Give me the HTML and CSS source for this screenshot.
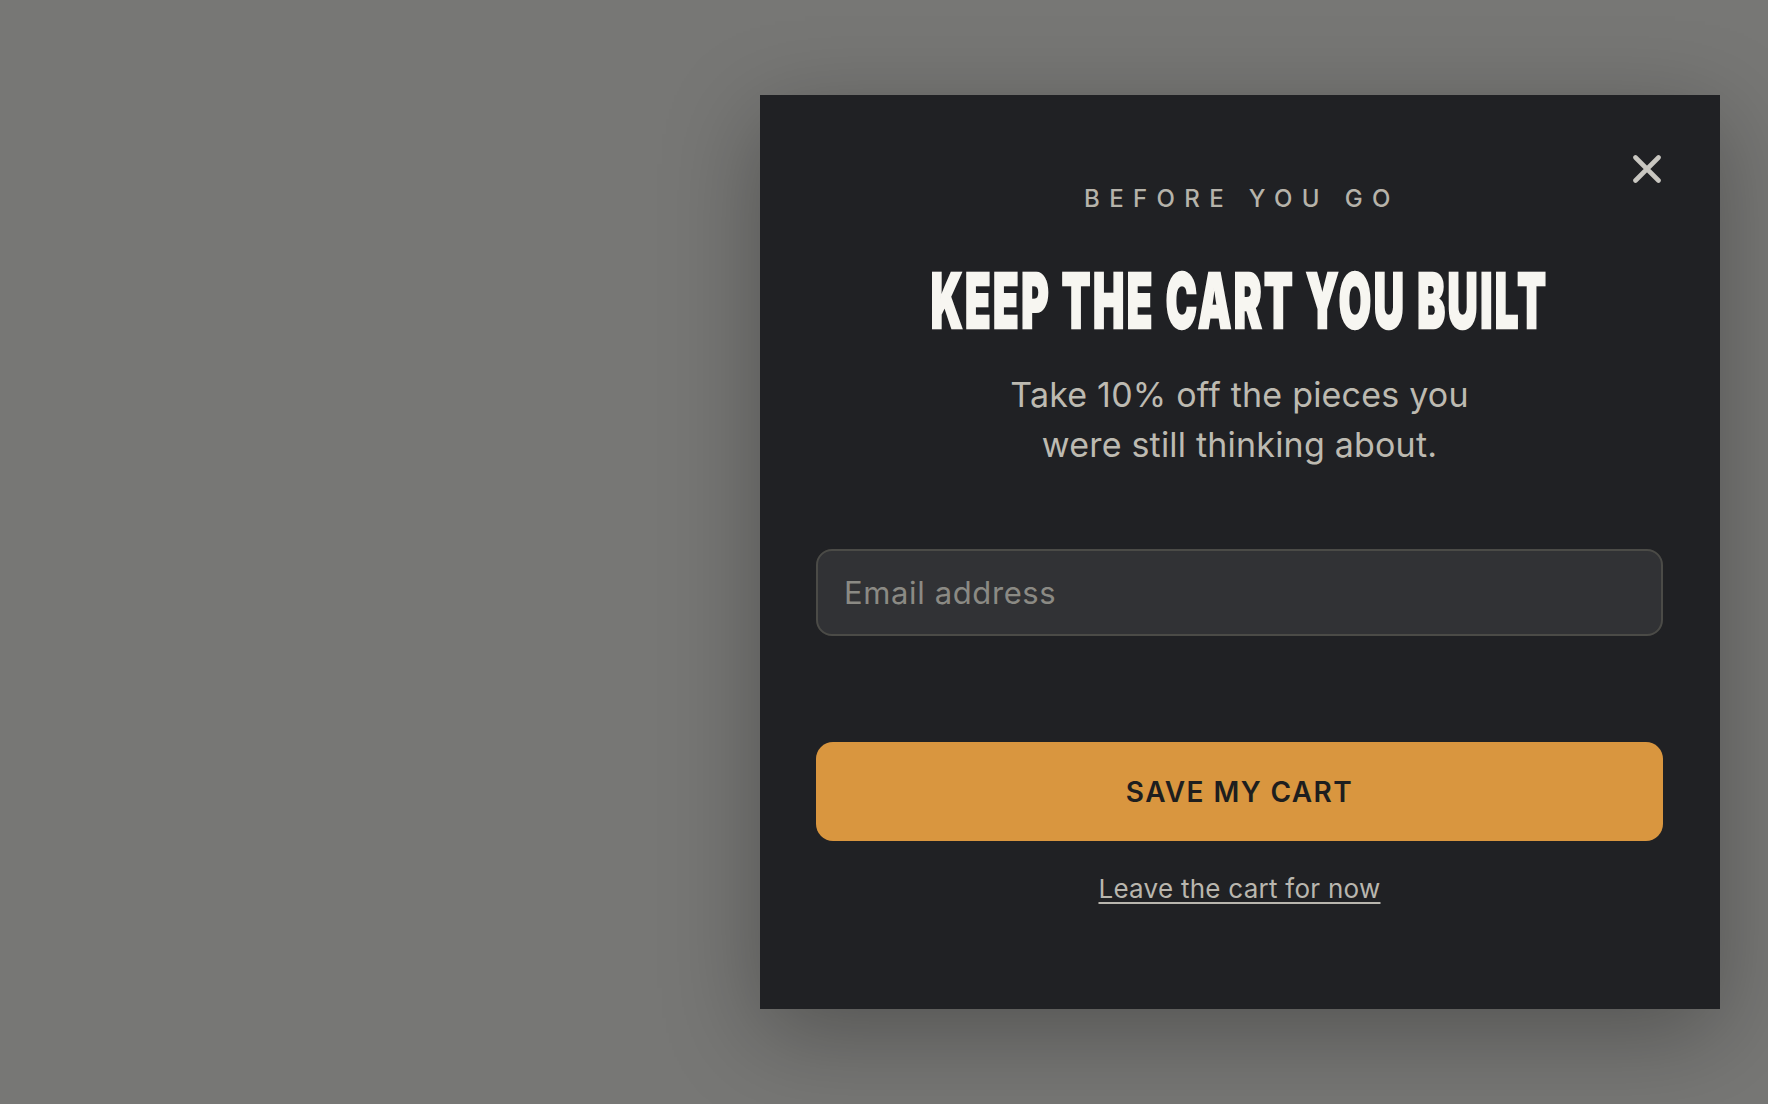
FILE: index.html
```html
<!DOCTYPE html>
<html lang="en">
<head>
<meta charset="utf-8">
<title>Before you go</title>
<link rel="stylesheet" href="styles.css">
</head>
<body>
  <div class="overlay">
    <section class="modal" role="dialog" aria-labelledby="modal-title">
      <button class="close" type="button" aria-label="Close">
        <svg viewBox="0 0 28 28" width="28" height="28" aria-hidden="true">
          <path d="M2.5 2.5 L25.5 25.5 M25.5 2.5 L2.5 25.5" fill="none" stroke="currentColor" stroke-width="4.6" stroke-linecap="round"/>
        </svg>
      </button>
      <p class="eyebrow">BEFORE YOU GO</p>
      <h1 class="title" id="modal-title"><span class="title-text">KEEP THE CART YOU BUILT</span></h1>
      <p class="lead">Take 10% off the pieces you were still thinking about.</p>
      <form class="form">
        <input class="email" type="email" placeholder="Email address">
        <button class="cta" type="button">SAVE MY CART</button>
      </form>
      <a class="dismiss" href="#">Leave the cart for now</a>
    </section>
  </div>
</body>
</html>
```
FILE: styles.css
```css
* { box-sizing: border-box; }

html, body {
  margin: 0;
  height: 100%;
}

body {
  background: #777775;
  font-family: Inter, "Noto Sans", sans-serif;
}

.overlay {
  height: 100%;
  display: flex;
  justify-content: flex-end;
  align-items: center;
  padding-right: 48px;
}

.modal {
  position: relative;
  width: 960px;
  height: 914px;
  background: #202124;
  box-shadow: 0 24px 90px rgba(0, 0, 0, 0.3);
  padding: 88px 57px 0 56px;
  display: flex;
  flex-direction: column;
  align-items: center;
  text-align: center;
}

.close {
  position: absolute;
  top: 52px;
  right: 51px;
  width: 44px;
  height: 44px;
  padding: 0;
  border: 0;
  background: transparent;
  color: #c9c7c1;
  display: flex;
  align-items: center;
  justify-content: center;
  cursor: pointer;
}

.eyebrow {
  margin: 0;
  font-size: 24px;
  line-height: 32px;
  font-weight: 500;
  letter-spacing: 0.39em;
  padding-left: 0.2em;
  color: #b6b3aa;
}

.title {
  align-self: stretch;
  margin: 43px 0 0;
  display: flex;
  justify-content: center;
  font-family: Inter, sans-serif;
  font-weight: 900;
  font-size: 76px;
  line-height: 84px;
  color: #f7f6f1;
  white-space: nowrap;
}

.title-text {
  display: block;
  flex: none;
  letter-spacing: 4.5px;
  -webkit-text-stroke: 2.5px #f7f6f1;
  transform: scaleX(0.55);
  transform-origin: 50% 50%;
}

.lead {
  margin: 28px 0 0;
  max-width: 500px;
  font-size: 34px;
  line-height: 50px;
  font-weight: 400;
  letter-spacing: 0.2px;
  color: #bdbab1;
}

.form {
  align-self: stretch;
  display: flex;
  flex-direction: column;
  margin-top: 79px;
}

.email {
  height: 87px;
  width: 100%;
  padding: 0 26px;
  border: 2px solid #4b4b47;
  border-radius: 16px;
  background: #313235;
  font-family: Inter, sans-serif;
  font-size: 31px;
  letter-spacing: 0.02em;
  color: #e6e4de;
  outline: none;
}

.email::placeholder {
  color: #8b8a84;
}

.cta {
  margin-top: 106px;
  height: 99px;
  border: 0;
  border-radius: 17px;
  background: #d9963f;
  color: #1e1e1e;
  font-family: Inter, sans-serif;
  font-size: 28px;
  font-weight: 600;
  letter-spacing: 0.05em;
  cursor: pointer;
}

.dismiss {
  margin-top: 30px;
  font-size: 26px;
  line-height: 36px;
  letter-spacing: 0.01em;
  color: #b9b6ae;
  text-decoration: underline;
  text-underline-offset: 4px;
  text-decoration-thickness: 2px;
}
```
